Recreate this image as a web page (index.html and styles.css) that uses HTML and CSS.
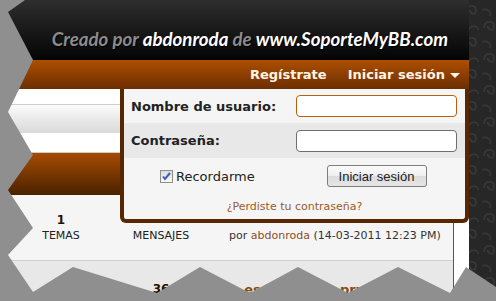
FILE: index.html
```html
<!DOCTYPE html>
<html lang="es">
<head>
    <meta charset="UTF-8">
    <title>SoporteMyBB - Foro</title>
    <link rel="stylesheet" href="styles.css">
</head>
<body>
    <div class="page">
        <div class="header">
            <span class="muted">Creado por</span> abdonroda <span class="muted">de</span> www.SoporteMyBB.com
        </div>
        <div class="nav">
            <a href="#">Regístrate</a>
            <a href="#">Iniciar sesión<span class="arrow"></span></a>
        </div>

        <div class="content">
            <div class="breadcrumb">Foro</div>

            <div class="forum">
                <div class="thead"></div>
                <div class="row">
                    <div class="stat"><strong>1</strong>TEMAS</div>
                    <div class="stat"><strong>&nbsp;</strong>MENSAJES</div>
                    <div class="lastpost">
                        por <a href="#">abdonroda</a> (14-03-2011 12:23 PM)
                    </div>
                </div>
                <div class="row alt">
                    <div class="stat"></div>
                    <div class="stat"><strong>36</strong></div>
                    <div class="lastpost">
                        <a href="#" class="title">Esta es la sala de pruebas</a>
                    </div>
                </div>
            </div>
        </div>
    </div>

    <!-- menu desplegable de inicio de sesion -->
    <form class="login">
        <div class="login-row">
            <label for="user">Nombre de usuario:</label>
            <input type="text" id="user" class="focus">
        </div>
        <div class="login-row alt">
            <label for="pass">Contraseña:</label>
            <input type="password" id="pass">
        </div>
        <div class="login-row actions">
            <label class="remember"><input type="checkbox" checked> Recordarme</label>
            <div class="btn-cell"><button type="button">Iniciar sesión</button></div>
        </div>
        <div class="lost"><a href="#">¿Perdiste tu contraseña?</a></div>
    </form>

    <!-- borde de papel rasgado -->
    <svg class="torn" width="496" height="301" viewBox="0 0 496 301">
        <polygon fill="#8f8f8f" points="0,0 25,0 8,12 33,60 8,112 33,155 8,190 33,228 8,255 33,292 73,267 157,293 200,267 250,293 298,267 348,293 398,267 450,293 466,267 496,287 496,301 0,301"/>
    </svg>
</body>
</html>
```

FILE: styles.css
```css
body {
    margin: 0;
    width: 496px;
    height: 301px;
    overflow: hidden;
    position: relative;
    font-family: "DejaVu Sans", Verdana, sans-serif;
    background-color: #272727;
    background-image: url("data:image/svg+xml,%3Csvg xmlns='http://www.w3.org/2000/svg' width='32' height='32'%3E%3Cpath d='M4 28c0-8 10-8 10-2s-6 4-6 0M18 12c0-8 10-8 10-2s-6 4-6 0M2 10c6-2 10 2 8 6M20 30c4-6 10-4 10 0' fill='none' stroke='%23383838' stroke-width='1.6'/%3E%3C/svg%3E");
}
a {
    text-decoration: none;
}
.page {
    width: 469px;
    height: 301px;
    overflow: hidden;
    background-color: #fff;
}
.header {
    height: 60px;
    box-sizing: border-box;
    padding: 28px 21px 0 0;
    text-align: right;
    background: linear-gradient(#2e2e2e, #040404);
    color: #fff;
    font-family: Lato, "Open Sans", sans-serif;
    font-size: 18.7px;
    font-weight: bold;
    font-style: italic;
    text-shadow: 1px 1px 1px #000;
    white-space: nowrap;
}
.header .muted {
    color: #8c8c8c;
}
.nav {
    width: 479px;
    height: 29px;
    box-sizing: border-box;
    border-radius: 0 5px 5px 0;
    background: linear-gradient(#ad4f00, #6c2e00);
    display: flex;
    justify-content: flex-end;
    align-items: center;
    gap: 21px;
    padding-right: 19px;
    position: relative;
}
.nav a {
    color: #fff4e8;
    font-size: 13px;
    font-weight: bold;
    display: flex;
    align-items: center;
}
.nav .arrow {
    width: 0;
    height: 0;
    margin-left: 5px;
    margin-top: 1px;
    border-left: 5px solid transparent;
    border-right: 5px solid transparent;
    border-top: 5px solid #fff4e8;
}
.content {
    padding: 15px 15px 0 0;
}
.breadcrumb {
    height: 28px;
    border-top: 1px solid #cfcfcf;
    background: linear-gradient(#fbfbfb, #d9d9d9);
    color: transparent;
}
.forum {
    margin-top: 19px;
    border-top: 1px solid #cdcdcd;
    border-right: 1px solid #8a4a14;
}
.thead {
    height: 42px;
    background: linear-gradient(#a64b00, #4a2200);
}
.row {
    display: grid;
    grid-template-columns: 122px 78px 1fr;
    align-items: center;
    height: 65px;
    background-color: #f5f5f5;
    border-bottom: 1px solid #d0d0d0;
    color: #222;
    font-size: 11px;
}
.row.alt {
    background-color: #e8e8e8;
    align-items: start;
    padding-top: 21px;
}
.stat {
    text-align: center;
    line-height: 15px;
}
.stat strong {
    display: block;
    font-size: 12px;
    color: #2a0e00;
}
.lastpost {
    padding: 15px 0 0 29px;
    line-height: 15px;
    color: #333;
}
.lastpost a {
    color: #8b4e1e;
}
.row.alt .lastpost {
    padding: 0 0 0 8px;
}
.lastpost .title {
    font-size: 13px;
    font-weight: bold;
    color: #8b4a12;
}
.login {
    position: absolute;
    left: 120px;
    top: 89px;
    width: 349px;
    box-sizing: border-box;
    margin: 0;
    border: 4px solid #572800;
    border-top: none;
    border-radius: 0 0 6px 6px;
    background-color: #f5f5f5;
}
.login-row {
    display: grid;
    grid-template-columns: 172px 161px;
    align-items: center;
    height: 34px;
}
.login-row.alt {
    background-color: #e8e8e8;
    height: 35px;
}
.login-row label {
    padding-left: 7px;
    font-size: 13px;
    font-weight: bold;
    color: #222;
}
.login input[type="text"],
.login input[type="password"] {
    width: 161px;
    height: 22px;
    box-sizing: border-box;
    border: 1px solid #6e6e6e;
    border-radius: 4px;
    background: #fff;
    margin: 0;
}
.login input.focus {
    border-color: #b4600f;
}
.login-row.actions {
    height: 36px;
}
.login-row label.remember {
    padding-left: 36px;
    font-size: 13px;
    font-weight: normal;
    display: flex;
    align-items: center;
    gap: 3px;
}
.remember input {
    appearance: none;
    width: 13px;
    height: 13px;
    margin: 0;
    border: 1px solid #8d8d8d;
    box-sizing: border-box;
    background: url("data:image/svg+xml,%3Csvg xmlns='http://www.w3.org/2000/svg' width='11' height='11'%3E%3Cpath d='M2 5.5l2 2.5 5-6' fill='none' stroke='%233b5fb5' stroke-width='2'/%3E%3C/svg%3E") center no-repeat, linear-gradient(#dcdcdc, #f8f8f8);
}
.btn-cell {
    text-align: center;
}
.login button {
    width: 100px;
    height: 22px;
    padding: 0;
    border: 1px solid #7d7d7d;
    border-radius: 3px;
    background: linear-gradient(#fbfbfb 0%, #efefef 50%, #dcdcdc 51%, #e6e6e6 100%);
    font-family: "Liberation Sans", Arial, sans-serif;
    font-size: 13px;
    color: #222;
}
.lost {
    height: 25px;
    text-align: center;
    font-size: 11px;
    line-height: 25px;
}
.lost a {
    color: #9a5b2c;
}
.torn {
    position: absolute;
    left: 0;
    top: 0;
    pointer-events: none;
}
```
